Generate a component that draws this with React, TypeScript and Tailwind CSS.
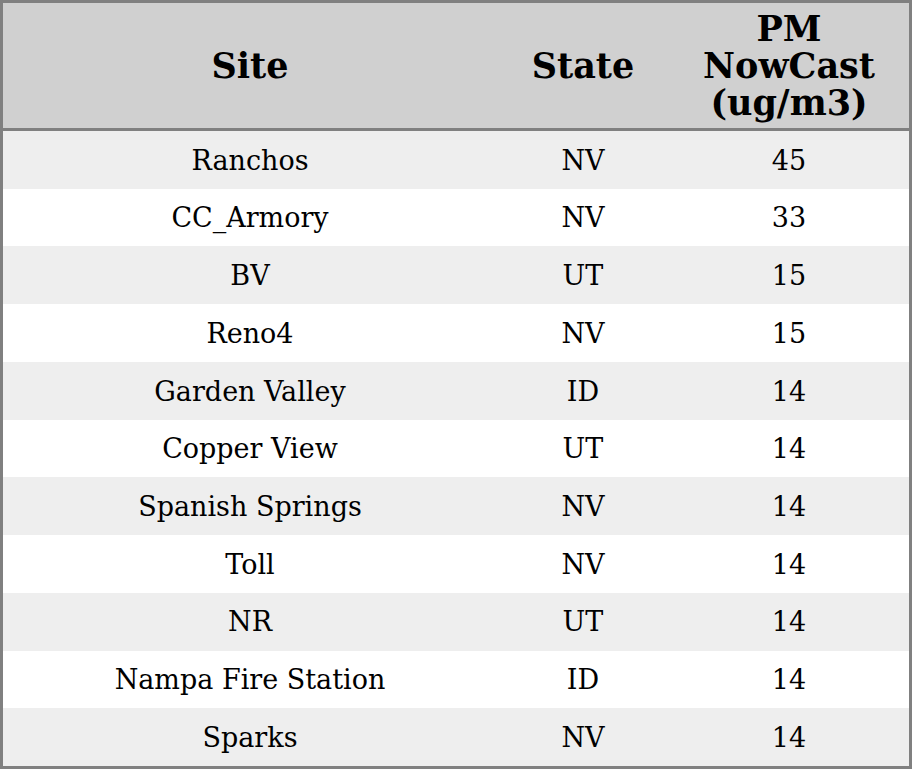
import React from 'react';

const ROWS: [string, string, number][] = [
  ['Ranchos', 'NV', 45],
  ['CC_Armory', 'NV', 33],
  ['BV', 'UT', 15],
  ['Reno4', 'NV', 15],
  ['Garden Valley', 'ID', 14],
  ['Copper View', 'UT', 14],
  ['Spanish Springs', 'NV', 14],
  ['Toll', 'NV', 14],
  ['NR', 'UT', 14],
  ['Nampa Fire Station', 'ID', 14],
  ['Sparks', 'NV', 14],
];

const cols = 'grid grid-cols-[494px_172px_1fr] items-center text-center';

export default function App() {
  return (
    <div
      className="w-[912px] h-[769px] flex flex-col border-[3px] border-[#808080] bg-white text-black"
      style={{ fontFamily: '"DejaVu Serif", serif' }}
    >
      <div className={`${cols} h-[128px] shrink-0 bg-[#d0d0d0] border-b-[3px] border-[#808080] text-[35px] leading-[37px] font-bold`}>
        <div>Site</div>
        <div>State</div>
        <div className="px-2">PM NowCast (ug/m3)</div>
      </div>
      {ROWS.map(([site, state, pm], i) => (
        <div key={site} className={`${cols} flex-1 pt-[2px] text-[27px] ${i % 2 === 0 ? 'bg-[#eeeeee]' : 'bg-white'}`}>
          <div>{site}</div>
          <div>{state}</div>
          <div>{pm}</div>
        </div>
      ))}
    </div>
  );
}
